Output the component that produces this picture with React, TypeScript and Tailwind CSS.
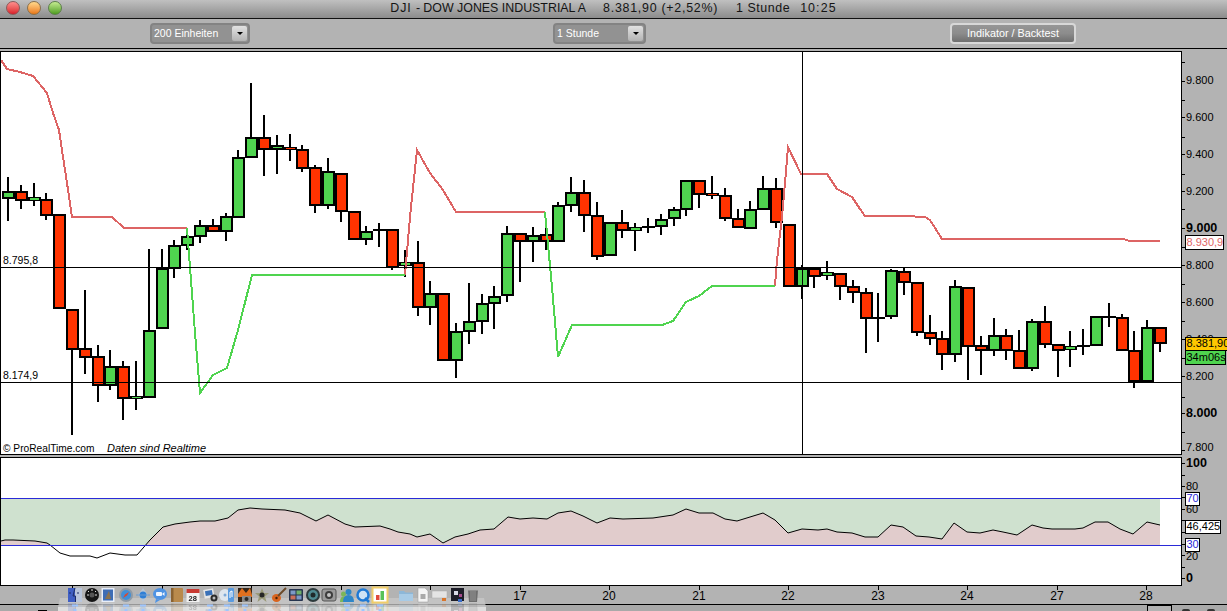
import type { ReactNode } from 'react'

type Candle = [number, number, number, number, 'g' | 'r']

// body top, body bottom, wick top, wick bottom (page pixels)
const candles: Candle[] = [
  [191, 199, 177, 221, 'g'], [191, 201, 185, 209, 'r'], [197, 201, 183, 206, 'g'], [199, 216, 193, 220, 'r'],
  [214, 309, 214, 309, 'r'], [309, 350, 309, 435, 'r'], [348, 358, 290, 374, 'r'], [356, 386, 345, 402, 'r'],
  [366, 386, 350, 390, 'g'], [366, 399, 361, 420, 'r'], [396, 399, 361, 410, 'g'], [330, 398, 249, 398, 'g'],
  [268, 329, 249, 329, 'g'], [245, 269, 240, 278, 'g'], [236, 246, 232, 250, 'g'], [225, 237, 220, 243, 'g'],
  [225, 232, 219, 232, 'r'], [216, 232, 213, 241, 'g'], [157, 218, 150, 218, 'g'], [137, 158, 83, 158, 'g'],
  [137, 150, 115, 176, 'r'], [145, 150, 135, 174, 'g'], [147, 150, 134, 161, 'r'], [149, 169, 145, 172, 'r'],
  [167, 206, 165, 213, 'r'], [171, 206, 158, 209, 'g'], [173, 212, 173, 222, 'r'], [211, 240, 211, 240, 'r'],
  [231, 240, 226, 245, 'g'], [229, 231, 223, 247, 'g'], [229, 268, 229, 270, 'r'], [262, 266, 250, 277, 'g'],
  [262, 308, 241, 316, 'r'], [293, 308, 281, 325, 'g'], [293, 361, 293, 361, 'r'], [331, 361, 323, 378, 'g'],
  [321, 332, 283, 344, 'g'], [303, 322, 294, 334, 'g'], [296, 304, 286, 329, 'g'], [233, 296, 226, 302, 'g'],
  [233, 242, 233, 282, 'r'], [235, 242, 227, 262, 'g'], [234, 242, 220, 250, 'r'], [205, 242, 202, 242, 'g'],
  [192, 206, 177, 212, 'g'], [192, 216, 180, 232, 'r'], [215, 257, 202, 260, 'r'], [222, 256, 222, 256, 'g'],
  [222, 231, 210, 238, 'r'], [227, 231, 223, 251, 'g'], [226, 228, 218, 233, 'g'], [219, 227, 214, 235, 'g'],
  [209, 219, 207, 226, 'g'], [180, 210, 180, 216, 'g'], [180, 195, 180, 208, 'r'], [193, 196, 176, 199, 'r'],
  [195, 219, 188, 221, 'r'], [218, 228, 209, 228, 'r'], [209, 229, 201, 229, 'g'], [188, 210, 176, 210, 'g'],
  [188, 223, 178, 228, 'r'], [224, 287, 224, 287, 'r'], [268, 287, 265, 299, 'g'], [268, 277, 268, 288, 'r'],
  [272, 276, 261, 280, 'g'], [273, 287, 273, 300, 'r'], [286, 293, 280, 303, 'r'], [292, 319, 288, 353, 'r'],
  [317, 319, 293, 342, 'r'], [270, 317, 269, 319, 'g'], [271, 283, 268, 295, 'r'], [282, 333, 282, 336, 'r'],
  [332, 339, 315, 345, 'r'], [338, 355, 331, 370, 'r'], [286, 355, 280, 362, 'g'], [287, 347, 287, 380, 'r'],
  [345, 351, 336, 375, 'r'], [335, 351, 318, 356, 'g'], [335, 351, 329, 360, 'r'], [350, 369, 330, 369, 'r'],
  [321, 369, 319, 371, 'g'], [321, 345, 306, 348, 'r'], [344, 351, 344, 377, 'r'], [346, 350, 331, 367, 'g'],
  [345, 347, 329, 355, 'r'], [316, 346, 316, 346, 'g'], [316, 318, 303, 327, 'r'], [317, 351, 314, 351, 'r'],
  [350, 382, 331, 388, 'r'], [327, 382, 320, 382, 'g'], [327, 344, 327, 352, 'r'],
]

const redLine = [
  '1,60 7,69 20,72 33,76 47,93 53,113 59,130 63,157 67,183 71,210 72,217 112,217 124,228 187,228',
  '405,275 408,240 411,207 417,150 430,173 443,190 456,212 545,212',
  '775,286 777,260 782,217 787,160 788,147 801,174 827,174 837,189 852,197 860,209 865,216 905,216 925,217 930,220 942,239 1123,239 1130,241 1160,241',
]

const greenLine = [
  '187,228 190,267 195,333 200,393 208,382 213,375 227,368 238,330 252,275 405,275',
  '545,212 552,287 558,357 572,325 662,325 673,321 686,302 699,296 712,286 775,286',
]

const rsi =
  '1,541 5,540 13,540 35,541 47,543 50,545 60,553 70,556 90,556 97,558 110,553 125,555 137,555 150,540 163,527 175,524 190,522 200,521 215,521 228,518 238,510 250,508 262,509 285,510 300,513 316,521 328,515 345,524 355,527 380,526 390,529 398,532 410,534 417,537 430,534 443,543 455,537 468,534 480,530 494,529 508,517 520,519 533,518 547,519 558,513 571,511 583,516 597,523 610,518 623,519 653,518 673,515 686,509 699,513 713,513 725,519 737,521 763,513 775,520 788,533 802,529 818,530 827,529 837,532 852,533 865,537 878,537 891,525 903,527 916,536 929,537 942,539 954,523 967,532 980,533 993,530 1003,532 1017,535 1032,525 1043,528 1052,529 1075,529 1083,528 1095,522 1108,522 1120,529 1133,534 1147,522 1160,525'

const priceLabels: [string, number, boolean][] = [
  ['9.800', 80, false], ['9.600', 117, false], ['9.400', 154, false], ['9.200', 191, false], ['9.000', 228, true],
  ['8.800', 265, false], ['8.600', 302, false], ['8.400', 339, false], ['8.200', 376, false], ['8.000', 413, true], ['7.800', 447, false],
]
const priceTicks = [62, 81, 100, 117, 137, 154, 174, 191, 209, 228, 247, 265, 284, 302, 321, 339, 358, 376, 397, 413, 432, 450]

const rsiLabels: [string, number, boolean][] = [
  ['100', 463, true], ['80', 486, false], ['60', 509, false], ['20', 556, false], ['0', 578, true],
]
const rsiTicks = [463, 475, 486, 497, 509, 520, 532, 544, 555, 567, 578]

const dates: [string, number][] = [
  ['17', 520], ['20', 609], ['21', 699], ['22', 788], ['23', 878], ['24', 967], ['27', 1057], ['28', 1146],
]
const dateTicks = [72, 162, 251, 341, 430, 520, 609, 699, 788, 878, 967, 1057, 1146]

function CandleMark({ c, i }: { c: Candle; i: number }) {
  const x = Math.round(8 + 12.8 * i)
  const [t, b, wt, wb, col] = c
  return (
    <g>
      <rect x={x - 1} y={wt} width={2} height={wb - wt} fill="#000" />
      <rect x={x - 6} y={t} width={13} height={b - t} fill="#000" />
      {b - t > 4 && <rect x={x - 4} y={t + 2} width={9} height={b - t - 4} fill={col === 'g' ? '#4fd44f' : '#ff3300'} />}
      {b - t <= 4 && b - t > 2 && <rect x={x - 4} y={t + 1} width={9} height={b - t - 2} fill={col === 'g' ? '#4fd44f' : '#ff3300'} />}
    </g>
  )
}

function Badge({ x, y, w, h, bg, fg, text }: { x: number; y: number; w: number; h: number; bg: string; fg: string; text: string }) {
  return (
    <g>
      <rect x={x + 0.5} y={y + 0.5} width={w} height={h} fill={bg} stroke="#000" />
      <text x={x + 1.5} y={y + h - 3} fontSize={11} fill={fg}>{text}</text>
    </g>
  )
}

function Select({ label, width }: { label: string; width: string }) {
  return (
    <div className={`flex h-[21px] items-center justify-between rounded-[4px] border-2 border-[#838383] bg-[#929292] pl-[2px] pr-[1px] ${width}`}>
      <span className="text-[10.500px] leading-none text-white">{label}</span>
      <span className="flex h-[15px] w-[15px] items-center justify-center rounded-[2px] bg-gradient-to-b from-[#e2e2e2] to-[#b4b4b4]">
        <span className="h-0 w-0 border-x-[3px] border-t-[3px] border-x-transparent border-t-black" />
      </span>
    </div>
  )
}

function Light({ from, to, ring }: { from: string; to: string; ring: string }) {
  return <span className={`h-[14px] w-[14px] rounded-full border bg-gradient-to-b ${from} ${to} ${ring}`} />
}

const dockIcons: [number, ReactNode][] = [
  [75, <g><rect x="1" y="1" width="7" height="14" fill="#3f5fc4" /><rect x="8" y="1" width="7" height="14" fill="#b9c6dc" /><path d="M8 1 L6 9 H8.500 V15" fill="none" stroke="#1d2c66" /><path d="M3 5v2M11 5v2" stroke="#1d2c66" /></g>],
  [92, <g><circle cx="8" cy="8" r="7" fill="#161616" /><circle cx="8" cy="8" r="2.500" fill="#555" /><path d="M8 2v2M3 8h2M11 8h2M4 4l1 1M12 4l-1 1" stroke="#ddd" /></g>],
  [108, <g><rect x="1.500" y="1" width="13" height="14" fill="#e8eef8" /><rect x="3" y="2.500" width="10" height="11" fill="#3e6db5" /><path d="M5 12 L9 4 L11 12Z" fill="#8a7350" /></g>],
  [126, <g><circle cx="8" cy="8" r="7" fill="#8f9aa6" /><circle cx="8" cy="8" r="5" fill="#3f8fd8" /><path d="M11 5 L7 7.500 L5 11 L9 8.500Z" fill="#d9482f" /></g>],
  [143, <g><path d="M8 1 L13 8 L8 15 L3 8Z" fill="#b8c6d6" /><circle cx="8" cy="8" r="3.500" fill="#2f7fd6" /><path d="M1 8h14" stroke="#6a9bd0" /></g>],
  [160, <g><ellipse cx="8" cy="7" rx="7" ry="6" fill="#4e93e4" /><path d="M4 12 L3 16 L8 13Z" fill="#4e93e4" /><rect x="4" y="5" width="6" height="4" rx="1" fill="#eef5ff" /><path d="M10 7 L12.500 5V9Z" fill="#eef5ff" /></g>],
  [177, <g><rect x="2" y="1" width="12" height="14" rx="1" fill="#b98a4c" /><rect x="2" y="1" width="2.500" height="14" fill="#8a6231" /></g>],
  [193, <g><rect x="1.500" y="2" width="13" height="13" fill="#f2f2f2" /><rect x="1.500" y="2" width="13" height="4" fill="#c83a32" /><text x="3.500" y="13.500" fontSize={7.500} fontWeight={700} fill="#222">28</text></g>],
  [210, <g><rect x="2" y="2" width="10" height="9" fill="#e6e6e6" transform="rotate(-10 7 7)" /><rect x="3.500" y="3.500" width="7" height="5" fill="#3a71b8" transform="rotate(-10 7 7)" /><circle cx="12" cy="11" r="3.500" fill="#2a2a2a" /><circle cx="12" cy="11" r="1.500" fill="#bbb" /></g>],
  [227, <g><circle cx="6" cy="8" r="6" fill="#dfe6ee" /><circle cx="6" cy="8" r="1.500" fill="#7ea9d8" /><rect x="9" y="1" width="6" height="14" rx="1" fill="#5a9be0" /><path d="M11 11V5l2-1v6" fill="none" stroke="#fff" /></g>],
  [245, <g><rect x="1" y="1" width="14" height="14" fill="#35281c" /><path d="M1 7 L5 1 L9 6 L13 1 L15 8 V10 H1Z" fill="#e0701f" /><rect x="5" y="9" width="9" height="6" fill="#8a8a8a" /><circle cx="9.500" cy="12" r="2" fill="#2b2b2b" /></g>],
  [262, <g><path d="M8 1 L10 6 L15 6 L11 9.500 L12.500 15 L8 11.500 L3.500 15 L5 9.500 L1 6 L6 6Z" fill="#9a9a78" /><circle cx="8" cy="8" r="2.500" fill="#262626" /></g>],
  [279, <g><ellipse cx="5.500" cy="11" rx="4.500" ry="4" fill="#d9641e" /><path d="M7 9 L15 1" stroke="#6b4a2a" strokeWidth="2" /><circle cx="5.500" cy="11" r="1.200" fill="#4a2208" /></g>],
  [296, <g><rect x="1" y="2" width="14" height="12" rx="1" fill="#27344f" /><rect x="2.500" y="3.500" width="5" height="4" fill="#7c99c7" /><rect x="8.500" y="3.500" width="5" height="4" fill="#6fb06b" /><rect x="2.500" y="8.500" width="5" height="4" fill="#c96f5c" /><rect x="8.500" y="8.500" width="5" height="4" fill="#7c99c7" /></g>],
  [313, <g><circle cx="8" cy="8" r="7" fill="#2c3a3c" /><circle cx="8" cy="8" r="5" fill="#4f8b92" /><circle cx="8" cy="8" r="2.500" fill="#1f2a2b" /></g>],
  [329, <g><rect x="1" y="2" width="14" height="12" rx="2" fill="#9a9a9a" stroke="#555" /><circle cx="8" cy="8" r="4" fill="#3c3c3c" /><circle cx="8" cy="8" r="2" fill="#c4c4c4" /></g>],
  [347, <g><circle cx="4.500" cy="7" r="2.500" fill="#7cb65a" /><path d="M1 15 Q1 9.500 4.500 9.500 Q8 9.500 8 15Z" fill="#7cb65a" /><circle cx="9.500" cy="5" r="3" fill="#2d86c8" /><path d="M4 15 Q4 8 9.500 8 Q15 8 15 15Z" fill="#2d86c8" /></g>],
  [363, <g><circle cx="8" cy="8" r="5.500" fill="#cfe3f5" stroke="#1e79d6" strokeWidth="2.500" /><path d="M10 11 L14 15" stroke="#1e79d6" strokeWidth="2.500" /></g>],
  [380, <g><rect x="0.500" y="0.500" width="15" height="15" fill="#fff" stroke="#f0cd6a" strokeWidth="2" /><rect x="4" y="8" width="3.500" height="5" fill="#e04a3a" /><rect x="8.500" y="4" width="3.500" height="9" fill="#57c257" /></g>],
  [406, <g><path d="M1 4 H6 L7.500 5.500 H15 V14 H1Z" fill="#8db7d8" /><rect x="1" y="7" width="14" height="7" fill="#a8cbe6" /></g>],
  [423, <g><path d="M3 1 H10 L13 4 V15 H3Z" fill="#f4f4f4" stroke="#999" strokeWidth="0.500" /><rect x="5.500" y="7" width="5" height="5" fill="#a9a9a9" /></g>],
  [440, <g><rect x="0" y="4" width="15" height="7" fill="#e4e4e4" stroke="#aaa" strokeWidth="0.500" /><rect x="10" y="11" width="4" height="3" fill="#d9752b" /></g>],
  [458, <g><rect x="1" y="1" width="13" height="13" fill="#1d1d28" /><rect x="4" y="4" width="4" height="4" fill="#d9d9e6" /><rect x="9" y="7" width="3" height="3" fill="#a44a8a" /><rect x="8" y="12" width="4" height="3" fill="#3a6cc8" /></g>],
  [473, <g><path d="M3 3 H13 L12 15 H4Z" fill="#6d6d6d" /><path d="M6 4v10M8 4v10M10 4v10" stroke="#a5a5a5" strokeWidth="0.700" /><rect x="2.500" y="1.500" width="11" height="2" fill="#b0b0b0" /></g>],
]

const dockLights = [75, 126, 143, 210, 227, 245, 347, 363, 380]

function Dock() {
  return (
    <svg className="absolute left-[56px] top-[584px] h-[27px] w-[434px] overflow-hidden" viewBox="56 584 434 27">
      <polygon points="60,598 484,598 486,607 58,607" fill="#c8c8c8" fillOpacity="0.75" />
      <polygon points="58,607 486,607 486,611 58,611" fill="#dedede" />
      {dockIcons.map(([x], i) => (
        <g key={`r${i}`} transform={`translate(${x - 8} 618) scale(1 -1)`} opacity="0.18" className="blur-[0.6px]">
          {dockIcons[i][1]}
        </g>
      ))}
      {dockIcons.map(([x, icon], i) => (
        <g key={i} transform={`translate(${x - 8} 587)`} className="blur-[0.5px]">
          {icon}
        </g>
      ))}
      {dockLights.map((x) => (
        <g key={x}>
          <rect x={x - 3} y={604.500} width={6} height={2} fill="#9fc6ff" />
          <rect x={x - 1.500} y={609} width={3} height={2} fill="#9fc6ff" />
        </g>
      ))}
    </svg>
  )
}

export default function App() {
  return (
    <div className="relative h-[611px] w-[1227px] overflow-hidden bg-[#b3b3b3] font-['Liberation_Sans',sans-serif] text-black">
      {/* Title bar */}
      <div className="relative flex h-[19px] items-center justify-center border-b border-b-[#111] bg-gradient-to-b from-[#c0c0c0] to-[#8c8c8c] pb-[1px]">
        <div className="absolute left-[6px] top-[1px] flex gap-[7px]">
          <Light from="from-[#ff8d8d]" to="to-[#d8182a]" ring="border-[#8a5a5a]" />
          <Light from="from-[#ffd98a]" to="to-[#e8780f]" ring="border-[#8a6f4a]" />
          <Light from="from-[#c5ec8f]" to="to-[#4f9e1c]" ring="border-[#5c7f4a]" />
        </div>
        <div className="flex whitespace-pre text-[12.400px] leading-none text-[#141414]">
          <span className="w-[33px] tracking-[0.9px]">DJI -</span>
          <span>DOW JONES INDUSTRIAL A</span>
          <span className="ml-[17px] tracking-[0.75px]">8.381,90 (+2,52%)</span>
          <span className="ml-[18px] tracking-[0.55px]">1 Stunde</span>
          <span className="ml-[10px] tracking-[1.1px]">10:25</span>
        </div>
      </div>

      {/* Toolbar */}
      <div className="flex h-[30px] items-center border-b border-b-black pl-[150px]">
        <Select label="200 Einheiten" width="w-[100px]" />
        <div className="ml-[303px]">
          <Select label="1 Stunde" width="w-[93px]" />
        </div>
        <button className="ml-[304px] h-[21px] w-[126px] rounded-[4px] border-2 border-[#d8d8d8] bg-gradient-to-b from-[#969696] via-[#8c8c8c] to-[#6f6f6f] text-[10.800px] leading-none text-white">
          Indikator / Backtest
        </button>
      </div>

      {/* Price chart */}
      <div className="mt-[2px] flex h-[404px]">
        <div className="h-[404px] w-[1182px] border border-black bg-white">
          <svg className="block h-[402px] w-[1180px]" viewBox="1 52 1180 402">
            <g shapeRendering="crispEdges">
              {candles.map((c, i) => (
                <CandleMark key={i} c={c} i={i} />
              ))}
              {redLine.map((p) => (
                <polyline key={p} points={p} fill="none" stroke="#dd6464" strokeWidth="2" />
              ))}
              {greenLine.map((p) => (
                <polyline key={p} points={p} fill="none" stroke="#4fd44f" strokeWidth="2" />
              ))}
              <rect x="0" y="267" width="1181" height="1" fill="#000" />
              <rect x="0" y="382" width="1181" height="1" fill="#000" />
              <rect x="802" y="52" width="1" height="402" fill="#000" />
            </g>
            <text x="3" y="264" fontSize="10.500">8.795,8</text>
            <text x="3" y="379" fontSize="10.500">8.174,9</text>
            <text x="3" y="452" fontSize="10.200">© ProRealTime.com</text>
            <text x="107" y="452" fontSize="11" fontStyle="italic">Daten sind Realtime</text>
          </svg>
        </div>
        <svg className="block h-[404px] w-[45px]" viewBox="1182 51 45 404">
          <g shapeRendering="crispEdges">
            {priceTicks.map((y) => (
              <rect key={y} x="1182" y={y} width="3" height="1" fill="#000" />
            ))}
          </g>
          {priceLabels.map(([t, y, bold]) => (
            <text key={t} x="1186" y={y + 4} fontSize={bold ? 12.500 : 11} fontWeight={bold ? 700 : 400}>
              {t}
            </text>
          ))}
          <Badge x={1185} y={235} w={38} h={14} bg="#fff" fg="#e06666" text="8.930,9" />
          <Badge x={1185} y={337} w={44} h={13} bg="#ffc800" fg="#000" text="8.381,90" />
          <Badge x={1185} y={350} w={40} h={14} bg="#4fd44f" fg="#000" text="34m06s" />
        </svg>
      </div>

      {/* RSI panel */}
      <div className="mt-[2px] flex h-[129px]">
        <div className="h-[129px] w-[1182px] border border-black bg-white">
          <svg className="block h-[127px] w-[1180px]" viewBox="1 458 1180 127">
            <defs>
              <clipPath id="above30">
                <rect x="0" y="498" width="1160" height="47" />
              </clipPath>
            </defs>
            <rect x="0" y="498" width="1160" height="47" fill="#cfe1cf" />
            <polygon points={`1,545 ${rsi} 1160,545`} fill="#e1cccc" clipPath="url(#above30)" />
            <polyline points={rsi} fill="none" stroke="#000" strokeWidth="1" />
            <g shapeRendering="crispEdges">
              <rect x="0" y="498" width="1181" height="1" fill="#2a2ad8" />
              <rect x="0" y="545" width="1181" height="1" fill="#2a2ad8" />
            </g>
          </svg>
        </div>
        <svg className="block h-[129px] w-[45px]" viewBox="1182 457 45 129">
          <g shapeRendering="crispEdges">
            {rsiTicks.map((y) => (
              <rect key={y} x="1182" y={y} width="3" height="1" fill="#000" />
            ))}
          </g>
          {rsiLabels.map(([t, y, bold]) => (
            <text key={t} x="1186" y={y + 4} fontSize={bold ? 12.500 : 11} fontWeight={bold ? 700 : 400}>
              {t}
            </text>
          ))}
          <Badge x={1185} y={492} w={14} h={13} bg="#fff" fg="#2a2ad8" text="70" />
          <Badge x={1185} y={520} w={35} h={13} bg="#fff" fg="#000" text="46,425" />
          <Badge x={1185} y={538} w={14} h={13} bg="#fff" fg="#2a2ad8" text="30" />
        </svg>
      </div>

      {/* Date axis */}
      <svg className="block h-[19px] w-[1227px] border-b border-b-black" viewBox="0 586 1227 18">
        <g shapeRendering="crispEdges">
          {dateTicks.map((x) => (
            <rect key={x} x={x} y="586" width="1" height="4" fill="#000" />
          ))}
        </g>
        {dates.map(([t, x]) => (
          <text key={t} x={x} y="600" fontSize="12" textAnchor="middle">
            {t}
          </text>
        ))}
      </svg>

      {/* Cut off window edge */}
      <div className="flex h-[6px] items-end bg-[#a9a9a9]">
        <span className="ml-[38px] h-[1px] w-[9px] bg-black" />
        <span className="ml-[1100px] h-[6px] w-[25px] border-x border-t border-black bg-[#b3b3b3]" />
        <span className="ml-[10px] h-[2px] w-[8px] rounded-t-full bg-[#333]" />
        <span className="ml-[17px] h-[2px] w-[8px] rounded-t-full bg-[#333]" />
      </div>

      <Dock />
    </div>
  )
}
